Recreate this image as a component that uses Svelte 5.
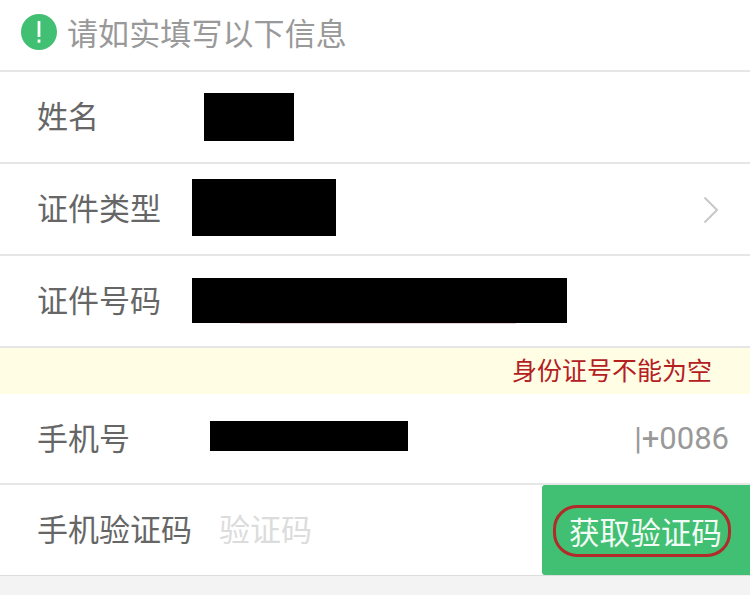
<script>
  const rows = [
    { label: '姓名', bar: 'name' },
    { label: '证件类型', bar: 'type', arrow: true },
    { label: '证件号码', bar: 'id' }
  ];
</script>

<div class="page">
  <header class="tip">
    <svg class="tip-icon" viewBox="0 0 36 36" width="36" height="36">
      <circle cx="18" cy="18" r="18" fill="#41bf72" />
      <rect x="16.6" y="7" width="2.8" height="16" fill="#fff" />
      <rect x="16.6" y="25.5" width="2.8" height="3.2" fill="#fff" />
    </svg>
    <span class="tip-text">请如实填写以下信息</span>
  </header>

  {#each rows as row}
    <div class="row">
      <span class="label">{row.label}</span>
      <span class="bar {row.bar}"></span>
      {#if row.arrow}
        <svg class="arrow" viewBox="0 0 16 28" width="16" height="28">
          <path d="M1.5 1.5 L14 14 L1.5 26.5" fill="none" stroke="#c8c8c8" stroke-width="2" />
        </svg>
      {/if}
    </div>
  {/each}

  <div class="error">身份证号不能为空</div>

  <div class="row phone">
    <span class="label">手机号</span>
    <span class="bar tel"></span>
    <span class="code">|+0086</span>
  </div>

  <div class="row verify">
    <span class="label">手机验证码</span>
    <span class="placeholder">验证码</span>
    <div class="send">
      <span class="send-text">获取验证码</span>
    </div>
  </div>

  <div class="footer"></div>
</div>

<style>
  :global(body) {
    margin: 0;
    background: #fff;
  }

  .page {
    width: 750px;
    height: 595px;
    overflow: hidden;
    font-family: "Noto Sans CJK SC", "Liberation Sans", sans-serif;
    display: flex;
    flex-direction: column;
  }

  .tip {
    height: 72px;
    flex: none;
    box-sizing: border-box;
    padding: 0 0 6px 21px;
    display: flex;
    align-items: center;
    gap: 10px;
    font-size: 31px;
    color: #999;
    border-bottom: 2px solid #e6e6e6;
  }

  .tip-icon {
    flex: none;
  }

  .tip-text {
    margin-top: -2px;
    letter-spacing: 0.1px;
  }

  .row {
    height: 92px;
    flex: none;
    box-sizing: border-box;
    padding-left: 37px;
    display: flex;
    align-items: center;
    border-bottom: 2px solid #e6e6e6;
    font-size: 31px;
    color: #666;
  }

  .label {
    white-space: nowrap;
    line-height: 1;
    margin-top: -5px;
  }

  .bar {
    display: block;
    background: #000;
    flex: none;
  }

  .name {
    width: 90px;
    height: 48px;
    margin: -1px 0 0 105px;
  }

  .type {
    width: 144px;
    height: 57px;
    margin: -4px 0 0 31px;
  }

  .id {
    width: 375px;
    height: 45px;
    margin: -2px 0 0 31px;
    position: relative;
  }

  .id::after {
    content: "";
    position: absolute;
    left: 48px;
    width: 276px;
    top: 100%;
    height: 1px;
    background: #e8d0d8;
  }

  .arrow {
    margin-left: auto;
    margin-right: 31px;
    margin-top: 1px;
  }

  .error {
    height: 46px;
    flex: none;
    box-sizing: border-box;
    padding: 0 38px 4px 0;
    background: #fffde4;
    color: #b3201f;
    font-size: 25px;
    display: flex;
    align-items: center;
    justify-content: flex-end;
  }

  .phone {
    height: 91px;
  }

  .tel {
    width: 198px;
    height: 30px;
    margin: -6px 0 0 80px;
  }

  .code {
    margin-left: auto;
    margin-right: 21px;
    font-family: "Roboto", "Liberation Sans", sans-serif;
    font-size: 31px;
    color: #999;
  }

  .verify {
    height: 91px;
    border-bottom: 1px solid #ddd;
  }

  .placeholder {
    margin-left: 27px;
    margin-top: -5px;
    line-height: 1;
    color: #dcdcdc;
  }

  .send {
    margin-left: auto;
    align-self: stretch;
    width: 208px;
    background: #41bf72;
    border-radius: 3px 0 0 3px;
    display: flex;
    align-items: center;
    justify-content: flex-start;
  }

  .send-text {
    color: #f2fbf5;
    font-size: 30.6px;
    line-height: 1;
    padding: 8px 6px 8px 13px;
    border: 3px solid #b22a2a;
    border-radius: 24px;
    white-space: nowrap;
    margin: 2px 0 0 11px;
  }

  .footer {
    flex: 1;
    background: #f3f3f3;
  }
</style>
